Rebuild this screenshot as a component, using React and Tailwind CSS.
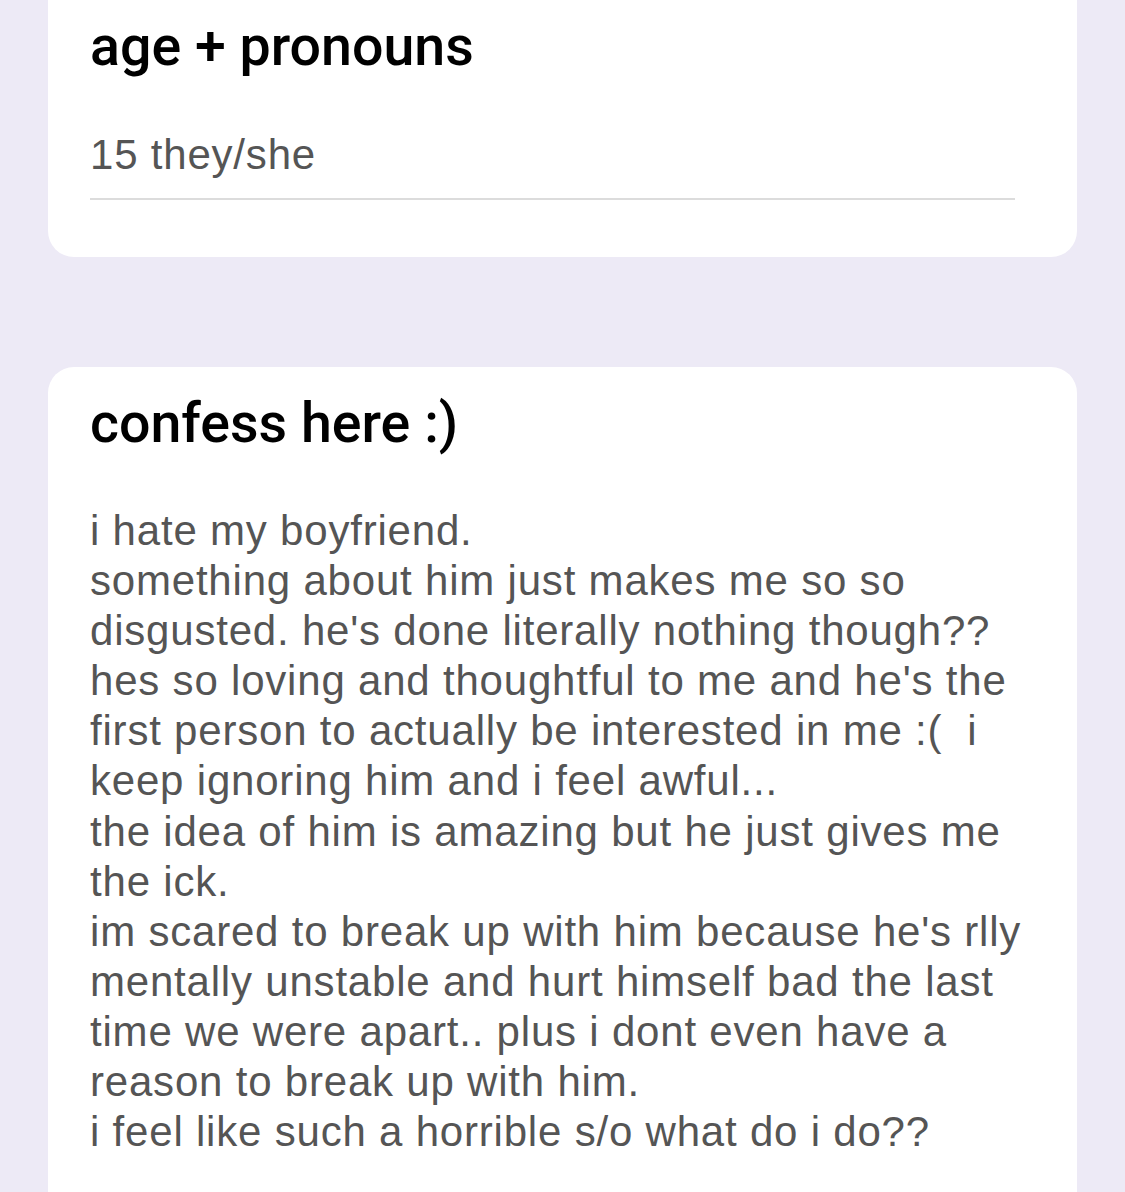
import React from 'react';

const confession = [
    "i hate my boyfriend.",
    "something about him just makes me so so",
    "disgusted. he's done literally nothing though??",
    "hes so loving and thoughtful to me and he's the",
    "first person to actually be interested in me :(  i",
    "keep ignoring him and i feel awful...",
    "the idea of him is amazing but he just gives me",
    "the ick.",
    "im scared to break up with him because he's rlly",
    "mentally unstable and hurt himself bad the last",
    "time we were apart.. plus i dont even have a",
    "reason to break up with him.",
    "i feel like such a horrible s/o what do i do??",
];

const App = () => {
    return (
        <div className="h-[1192px] overflow-hidden bg-[#edeaf6] px-[48px] flex flex-col font-['Liberation_Sans',Arial,sans-serif]">
            {/* age + pronouns field */}
            <div className="bg-white rounded-b-[26px] pl-[42px] pr-[62px] pt-[17px] pb-[57px]">
                <h2 className="font-['Roboto','Liberation_Sans',sans-serif] font-medium text-[55.5px] leading-[60px] text-black">
                    age + pronouns
                </h2>
                <p className="mt-[53px] text-[42px] leading-[50px] tracking-[0.8px] text-[#555555] pb-[18px] border-b-2 border-[#dcdcdc]">
                    15 they/she
                </p>
            </div>

            {/* confession field */}
            <div className="mt-[110px] flex-1 bg-white rounded-t-[26px] pl-[42px] pr-[40px] pt-[27px]">
                <h2 className="font-['Roboto','Liberation_Sans',sans-serif] font-medium text-[55.5px] leading-[60px] text-black">
                    confess here :)
                </h2>
                <div className="mt-[52px] text-[42px] leading-[50.1px] tracking-[0.8px] text-[#555555]">
                    {confession.map((line, i) => (
                        <div key={i} className="whitespace-pre">{line}</div>
                    ))}
                </div>
            </div>
        </div>
    );
};

export default App;
